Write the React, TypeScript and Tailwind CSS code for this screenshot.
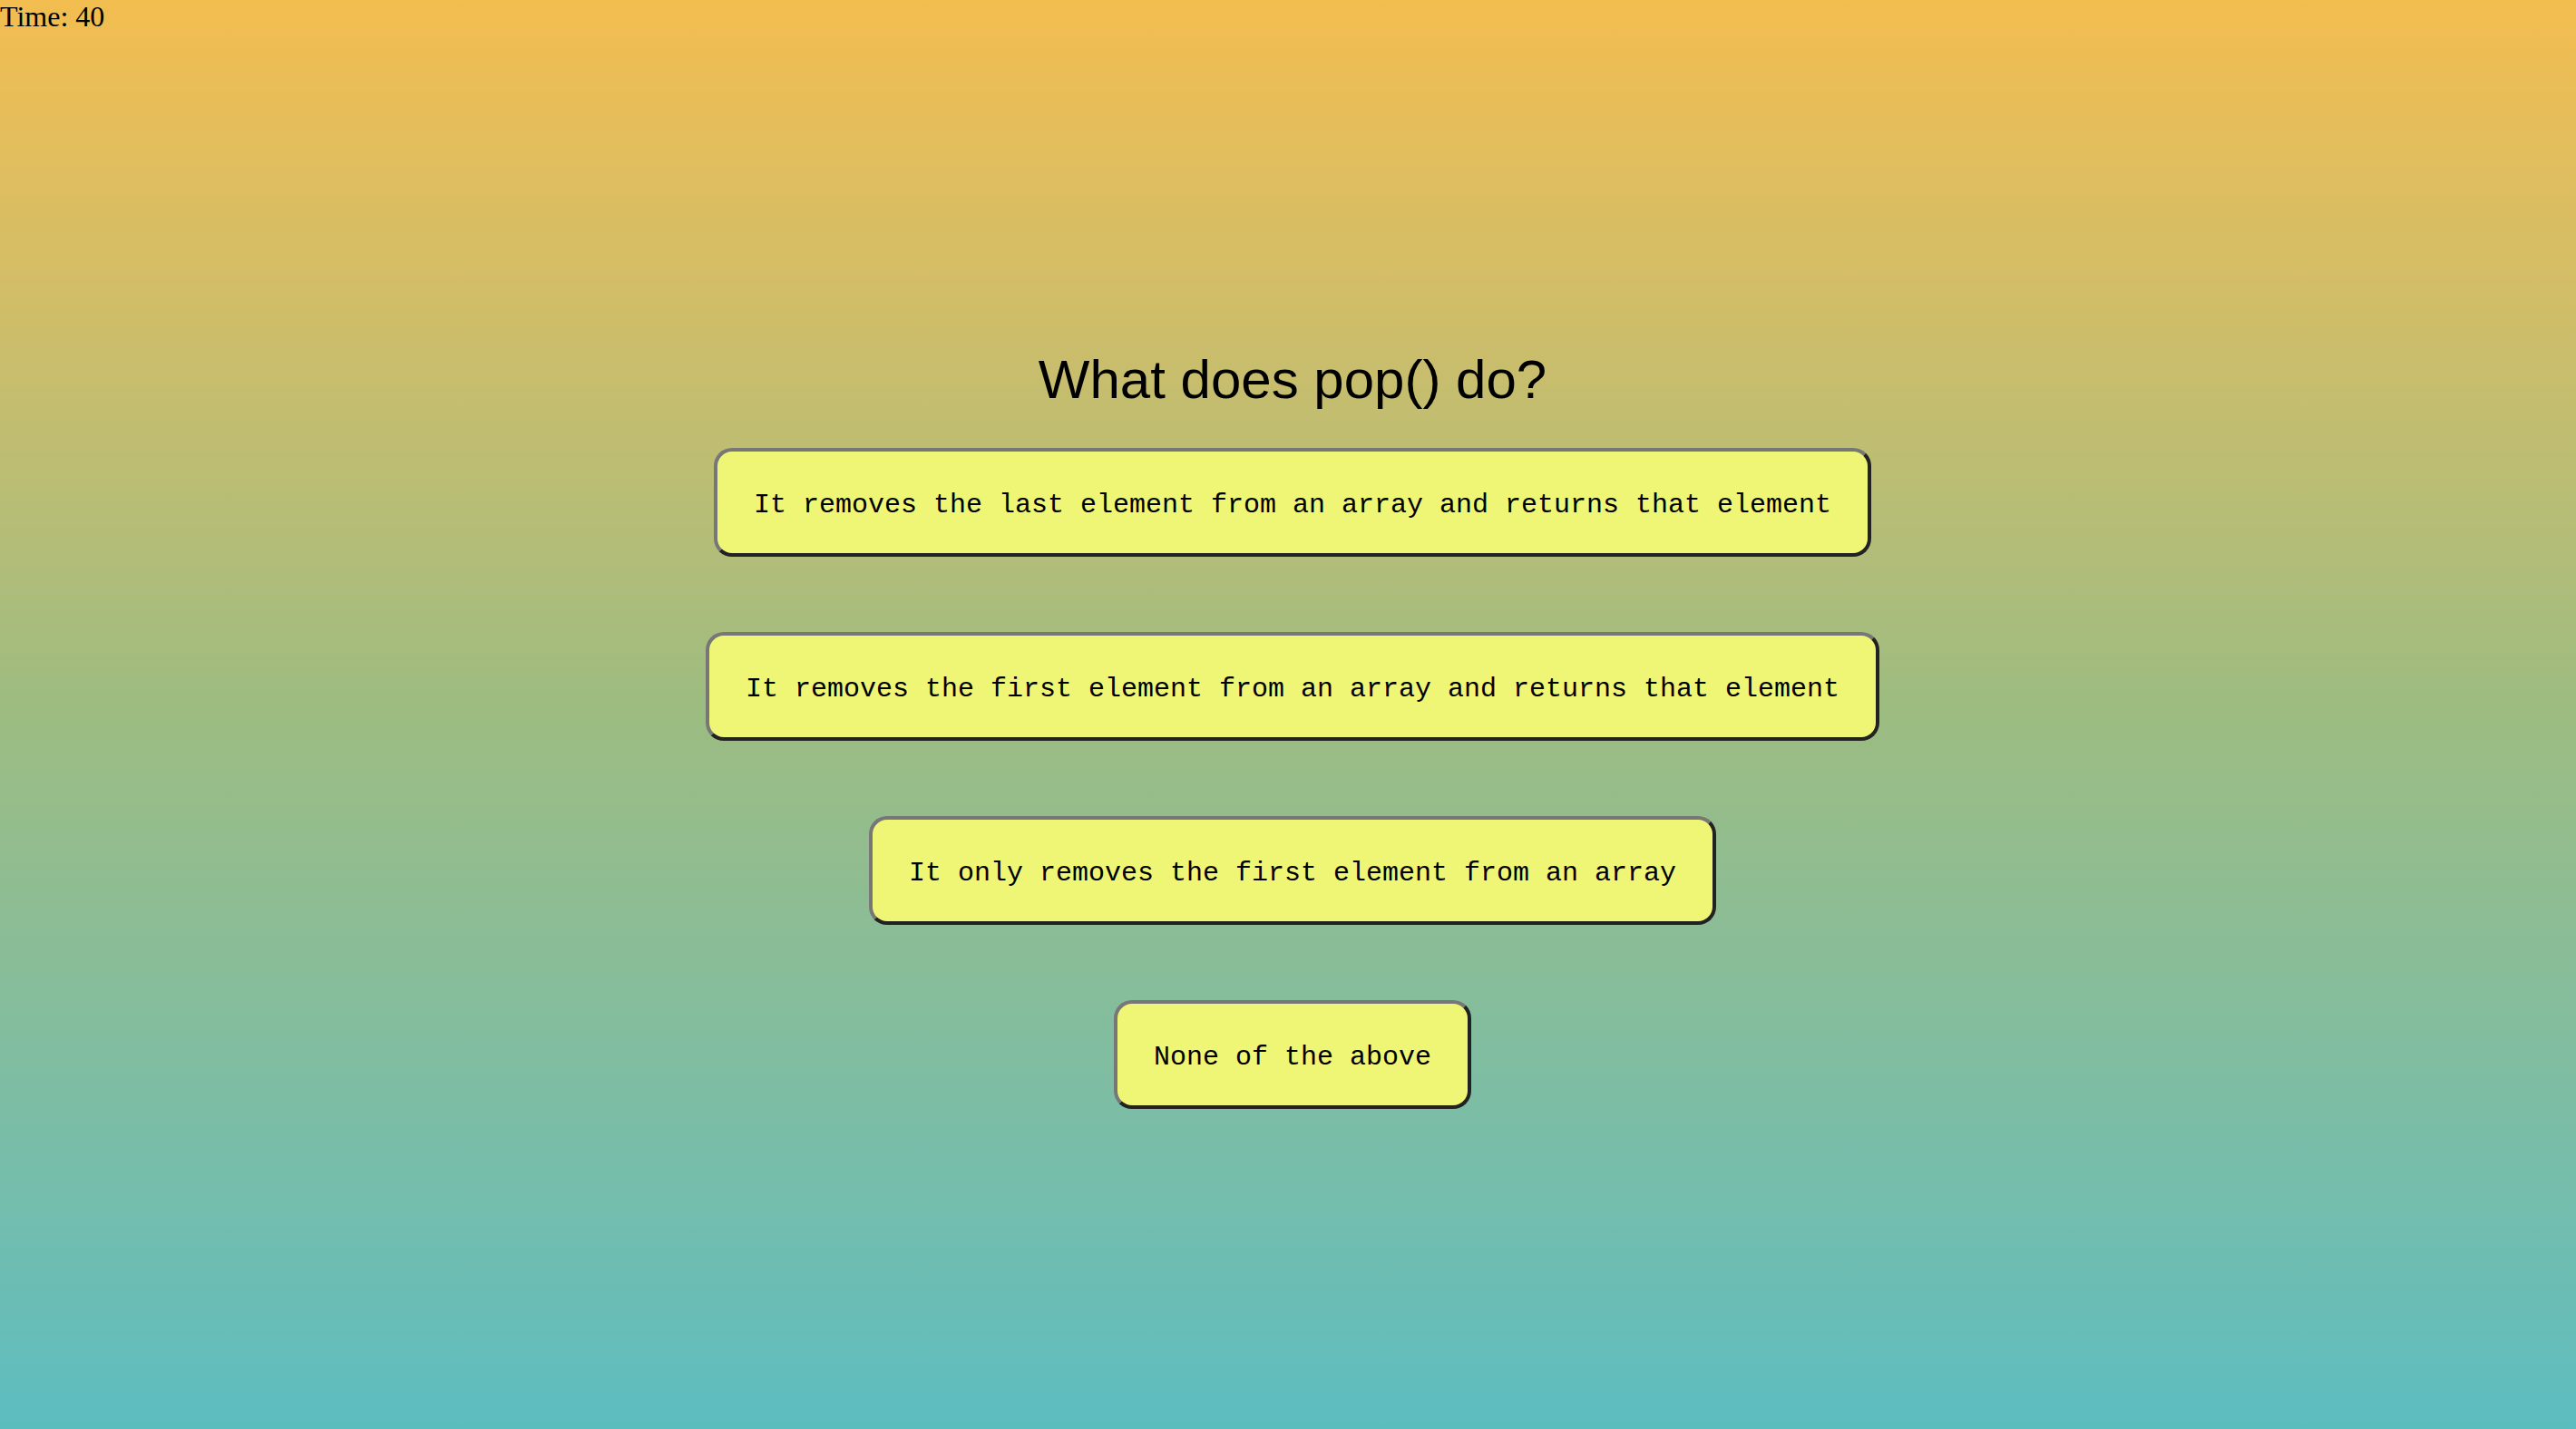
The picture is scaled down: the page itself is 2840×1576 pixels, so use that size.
import { useState, useEffect } from 'react'

const ANSWERS = [
  'It removes the last element from an array and returns that element',
  'It removes the first element from an array and returns that element',
  'It only removes the first element from an array',
  'None of the above',
]

export default function App() {
  const [time, setTime] = useState(40)

  useEffect(() => {
    // frozen at 40 for the screenshot; the countdown would tick here
    setTime(40)
  }, [])

  return (
    <div className="min-h-screen w-full bg-gradient-to-b from-[#f3bd4f] via-[#9cbc81] to-[#5cbdc0]">
      <div className="font-['Liberation_Serif',serif] text-[32px] leading-[36px] text-black">
        Time: {time}
      </div>

      <div className="flex flex-col items-center pt-[348px] pl-[10px]">
        <h1 className="font-['Liberation_Sans',Arial,sans-serif] text-[60px] leading-[69px] font-normal text-black">
          What does pop() do?
        </h1>

        <div className="mt-[41px] flex flex-col items-center gap-[83px]">
          {ANSWERS.map((answer) => (
            <button
              key={answer}
              className="rounded-[20px] border-4 border-t-[#777777] border-l-[#777777] border-b-[#222222] border-r-[#222222] bg-[#eff676] px-[40px] pt-[43px] pb-[37px] font-['Liberation_Mono','Courier_New',monospace] text-[30px] leading-[32px] text-black"
            >
              {answer}
            </button>
          ))}
        </div>
      </div>
    </div>
  )
}
